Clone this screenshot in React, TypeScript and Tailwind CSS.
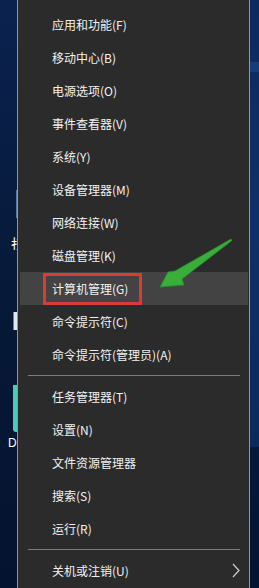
import React from "react";

type Item = { label: string; hover?: boolean; sub?: boolean } | "sep";

const items: Item[] = [
  { label: "应用和功能(F)" },
  { label: "移动中心(B)" },
  { label: "电源选项(O)" },
  { label: "事件查看器(V)" },
  { label: "系统(Y)" },
  { label: "设备管理器(M)" },
  { label: "网络连接(W)" },
  { label: "磁盘管理(K)" },
  { label: "计算机管理(G)", hover: true },
  { label: "命令提示符(C)" },
  { label: "命令提示符(管理员)(A)" },
  "sep",
  { label: "任务管理器(T)" },
  { label: "设置(N)" },
  { label: "文件资源管理器" },
  { label: "搜索(S)" },
  { label: "运行(R)" },
  "sep",
  { label: "关机或注销(U)", sub: true },
];

export default function App() {
  return (
    <div
      className="flex w-[259px] h-[588px] overflow-hidden bg-[#0a1f45]"
      style={{ fontFamily: '"Noto Sans CJK SC", "Noto Sans", sans-serif' }}
    >
      {/* left desktop strip */}
      <div className="relative w-[17px] h-full shrink-0 bg-gradient-to-b from-[#0b2250] via-[#061938] to-[#041430]">
        <div className="absolute left-[16px] top-[190px] w-[1px] h-[28px] bg-[#5a7aa3]" />
        <div className="absolute left-[11px] top-[236px] text-[14px] leading-[14px] text-white overflow-hidden w-[6px]">
          扫
        </div>
        <div className="absolute left-[13px] top-[312px] w-[4px] h-[18px] bg-[#dfe8f5] border-l border-[#4d86d0]" />
        <div className="absolute left-[13px] top-[385px] w-[4px] h-[47px] bg-[#4fcab6] rounded-bl-[3px]" />
        <div className="absolute left-[8px] top-[436px] text-[12px] leading-[14px] text-white" style={{ fontFamily: '"Liberation Sans", sans-serif' }}>
          D
        </div>
      </div>
      <div className="w-[1px] h-full shrink-0 bg-[#8a97ab]" />

      {/* menu */}
      <div className="relative w-[231px] h-full shrink-0 bg-[#2b2b2b] pt-[8px] flex flex-col">
        {items.map((it, i) =>
          it === "sep" ? (
            <div key={i} className="h-[9px] flex items-center shrink-0">
              <div className="ml-[10px] mr-[9px] h-[1px] flex-1 bg-[#7d7d7d]" />
            </div>
          ) : (
            <div
              key={i}
              className={
                "relative h-[33px] shrink-0 ml-[2px] mr-[1px] flex items-center pl-[32px] text-[12px] text-[#f2f2f2] " +
                (it.hover ? "bg-[#434343]" : "")
              }
            >
              <span className="leading-[16px]">{it.label}</span>
              {it.hover && (
                <div className="absolute left-[23px] top-[1px] w-[99px] h-[32px] border-[3px] border-[#d93b35]" />
              )}
              {it.sub && (
                <svg
                  className="absolute left-[212px] top-[9px]"
                  width="8"
                  height="15"
                  viewBox="0 0 8 15"
                  fill="none"
                >
                  <path d="M1 1 L7 7.5 L1 14" stroke="#cfcfcf" strokeWidth="1.2" />
                </svg>
              )}
            </div>
          )
        )}

        {/* green arrow annotation */}
        <svg
          className="absolute left-[122px] top-[232px]"
          width="95"
          height="60"
          viewBox="140 232 95 60"
        >
          <polygon
            points="160,287 168,272 175,271 231,239 232,240.5 182,279 184,285"
            fill="#3aae3a"
            stroke="#2a8a2a"
            strokeWidth="0.8"
            strokeLinejoin="round"
          />
        </svg>
      </div>

      <div className="w-[1px] h-full shrink-0 bg-[#8c99ad]" />
      {/* right desktop strip */}
      <div className="relative w-[9px] h-full shrink-0 flex flex-col">
        <div className="h-[447px] bg-gradient-to-b from-[#0c2a5e] via-[#0e3068] to-[#0b2a5c]" />
        <div className="flex-1 bg-gradient-to-b from-[#05193d] to-[#031332]" />
        <div className="absolute left-0 top-[62px] w-[9px] h-[10px] bg-[#1c4a8a] opacity-60" />
      </div>
    </div>
  );
}
